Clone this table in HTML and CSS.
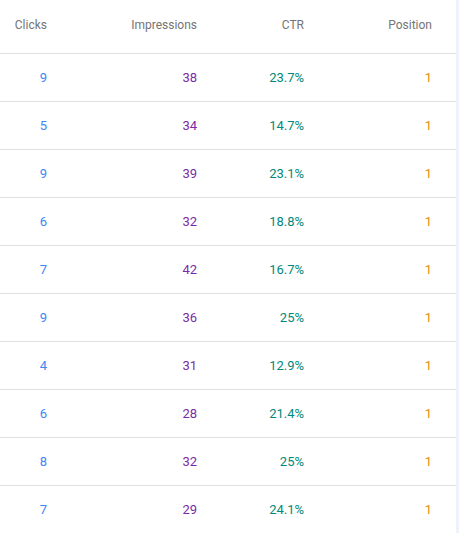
FILE: index.html
```html
<!DOCTYPE html>
<html lang="en">
    <head>
        <meta charset="UTF-8">
        <title>Queries</title>
        <link rel="stylesheet" href="styles.css">
    </head>
    <body>
        <div class="page">
            <div class="table">
                <div class="row head">
                    <span>Clicks</span>
                    <span>Impressions</span>
                    <span>CTR</span>
                    <span>Position</span>
                </div>
                <div class="row"><span class="clicks">9</span><span class="impr">38</span><span class="ctr">23.7%</span><span class="pos">1</span></div>
                <div class="row"><span class="clicks">5</span><span class="impr">34</span><span class="ctr">14.7%</span><span class="pos">1</span></div>
                <div class="row"><span class="clicks">9</span><span class="impr">39</span><span class="ctr">23.1%</span><span class="pos">1</span></div>
                <div class="row"><span class="clicks">6</span><span class="impr">32</span><span class="ctr">18.8%</span><span class="pos">1</span></div>
                <div class="row"><span class="clicks">7</span><span class="impr">42</span><span class="ctr">16.7%</span><span class="pos">1</span></div>
                <div class="row"><span class="clicks">9</span><span class="impr">36</span><span class="ctr">25%</span><span class="pos">1</span></div>
                <div class="row"><span class="clicks">4</span><span class="impr">31</span><span class="ctr">12.9%</span><span class="pos">1</span></div>
                <div class="row"><span class="clicks">6</span><span class="impr">28</span><span class="ctr">21.4%</span><span class="pos">1</span></div>
                <div class="row"><span class="clicks">8</span><span class="impr">32</span><span class="ctr">25%</span><span class="pos">1</span></div>
                <div class="row last"><span class="clicks">7</span><span class="impr">29</span><span class="ctr">24.1%</span><span class="pos">1</span></div>
            </div>
            <div class="edge"></div>
        </div>
    </body>
</html>
```

FILE: styles.css
```css
* {
    box-sizing: border-box;
}

body {
    margin: 0;
    font-family: Roboto, "Liberation Sans", sans-serif;
    font-size: 13px;
    background: #fff;
}

.page {
    display: flex;
    height: 533px;
    overflow: hidden;
}

.table {
    width: 456px;
}

.edge {
    width: 3px;
    background: #eef2fa;
}

.row {
    display: grid;
    grid-template-columns: 71px 150px 107px 128px;
    height: 48px;
    align-items: center;
    border-bottom: 1px solid #e0e0e0;
}

.row span {
    text-align: right;
    padding-right: 24px;
    line-height: 16px;
}

.head {
    height: 54px;
    font-size: 12px;
    color: #757575;
    padding-bottom: 4px;
}

.last {
    border-bottom: none;
}

.clicks {
    color: #4285f4;
}

.impr {
    color: #7b2ba6;
}

.ctr {
    color: #00897b;
}

.pos {
    color: #ec8a0e;
}
```
